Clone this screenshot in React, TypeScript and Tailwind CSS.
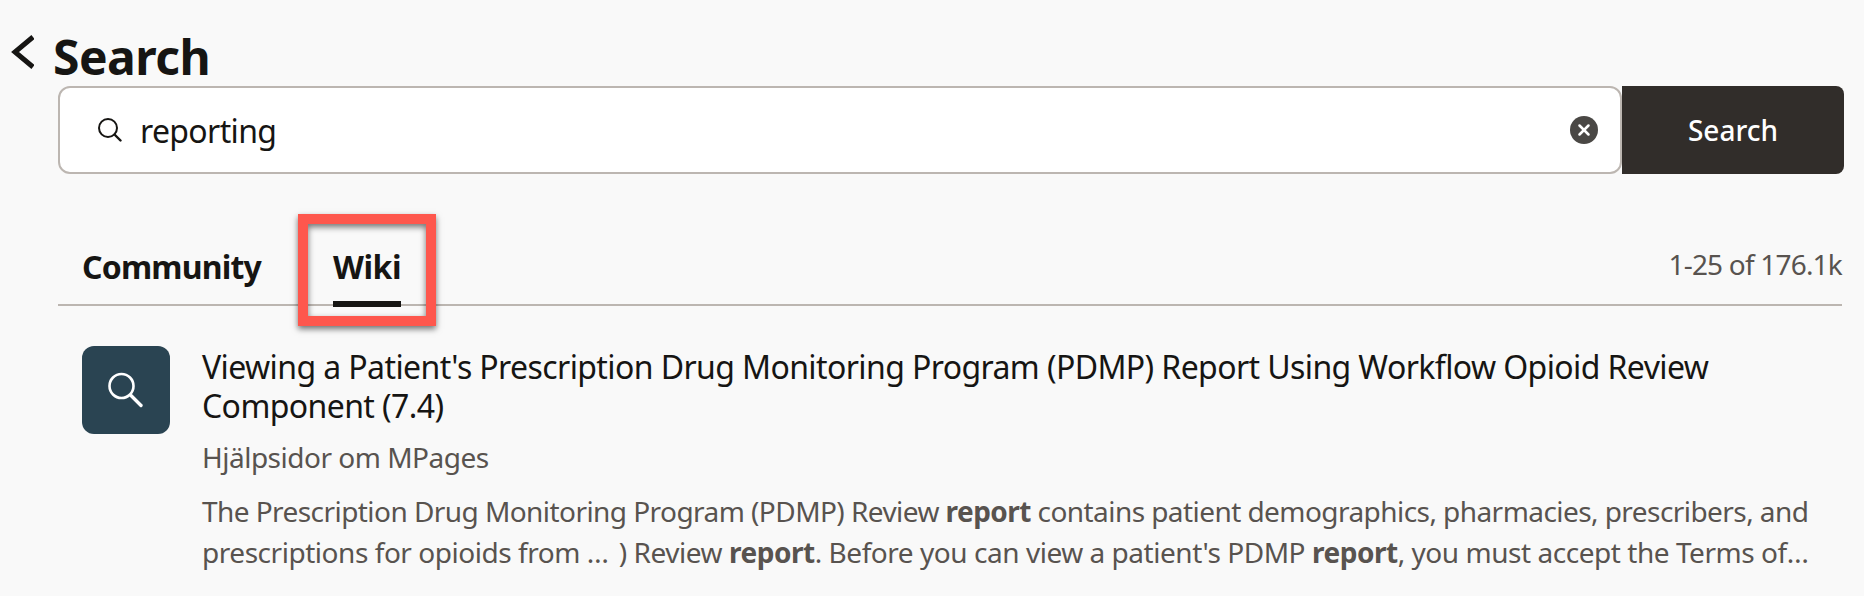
import { X } from "lucide-react";

const font = { fontFamily: '"Noto Sans", sans-serif' };

function SearchBar() {
  return (
    <div className="flex h-[88px] ml-[58px] mr-[20px]">
      <div className="flex flex-1 items-center bg-white border-2 border-[#bcb6b1] rounded-[12px] pl-[36px] pr-[22px]">
        <svg className="w-[26px] h-[26px]" viewBox="0 0 26 26" fill="none" stroke="#161513" strokeWidth="2" strokeLinecap="round">
          <circle cx="12" cy="11" r="9" />
          <path d="M18.5 17.5 L24.5 23.5" strokeWidth="2.4" />
        </svg>
        <span className="ml-[18px] pt-[2px] text-[32px] tracking-[-0.65px] leading-none text-[#161513]">reporting</span>
        <div className="ml-auto flex items-center justify-center w-[28px] h-[28px] rounded-full bg-[#4a4845]">
          <X className="w-[18px] h-[18px] text-white" strokeWidth={3.4} />
        </div>
      </div>
      <button className="w-[222px] bg-[#312d2a] rounded-r-[8px] text-white text-[28px] font-medium">Search</button>
    </div>
  );
}

function Tabs() {
  return (
    <div className="relative mt-[38px] ml-[58px] mr-[22px] h-[94px] border-b-2 border-[#bcb6b1] flex items-start pl-[24px]">
      <span className="mt-[33px] text-[32px] tracking-[-0.8px] leading-[44px] font-bold text-[#161513]">Community</span>
      <div className="relative ml-[72px] mt-[33px] h-[61px]">
        <span className="text-[32px] tracking-[-0.5px] leading-[44px] font-bold text-[#161513]">Wiki</span>
        <div className="absolute left-0 right-0 bottom-[-1px] h-[6px] bg-[#161513]" />
      </div>
      <span className="ml-auto mt-[34px] text-[28px] tracking-[-0.8px] leading-[36px] text-[#58534f]">1-25 of 176.1k</span>
      {/* annotation box on top of the tabs */}
      <div className="absolute left-[240px] top-[2px] w-[138px] h-[112px] border-[10px] border-[#fe574d] shadow-[0_3px_6px_rgba(0,0,0,0.55),inset_0_3px_6px_rgba(0,0,0,0.55)]" />
    </div>
  );
}

function Result() {
  return (
    <div className="flex mt-[40px] ml-[82px] mr-[40px]">
      <div className="flex items-center justify-center shrink-0 w-[88px] h-[88px] rounded-[12px] bg-[#2a4452]">
        <svg className="w-[40px] h-[40px]" viewBox="0 0 40 40" fill="none" stroke="#ffffff" strokeWidth="2.6" strokeLinecap="round">
          <circle cx="15.5" cy="16" r="12" />
          <path d="M25 25.5 L35 35.5" strokeWidth="3.4" />
        </svg>
      </div>
      <div className="ml-[32px] flex-1">
        <div className="pt-[1px] text-[32px] tracking-[-0.6px] leading-[39px] text-[#161513]">
          Viewing a Patient's Prescription Drug Monitoring Program (PDMP) Report Using Workflow Opioid Review Component (7.4)
        </div>
        <div className="mt-[14px] text-[28px] tracking-[-0.5px] leading-[36px] text-[#58534f]">Hjälpsidor om MPages</div>
        <div className="mt-[16px] text-[28px] leading-[41px] text-[#58534f]">
          <div className="whitespace-nowrap tracking-[-0.56px]">
            The Prescription Drug Monitoring Program (PDMP) Review <b>report</b> contains patient demographics, pharmacies, prescribers, and
          </div>
          <div className="whitespace-nowrap tracking-[-0.46px]">
            prescriptions for opioids from <span className="tracking-[3px]">…</span> ) Review <b>report</b>. Before you can view a patient's PDMP <b>report</b>, you must accept the Terms of<span className="tracking-[3px]">…</span>
          </div>
        </div>
      </div>
    </div>
  );
}

export default function App() {
  return (
    <div className="w-[1864px] h-[596px] overflow-hidden bg-[#f9f9f9]" style={font}>
      <div className="flex items-start pt-[27px] h-[86px]">
        <svg className="ml-[10px] mt-[8px] w-[24px] h-[34px]" viewBox="0 0 24 34" fill="none" stroke="#161513" strokeWidth="5">
          <path d="M23 2 L5 17 L23 32" />
        </svg>
        <h1 className="ml-[19px] text-[48px] tracking-[-0.5px] leading-[60px] font-bold text-[#161513]">Search</h1>
      </div>
      <SearchBar />
      <Tabs />
      <Result />
    </div>
  );
}
